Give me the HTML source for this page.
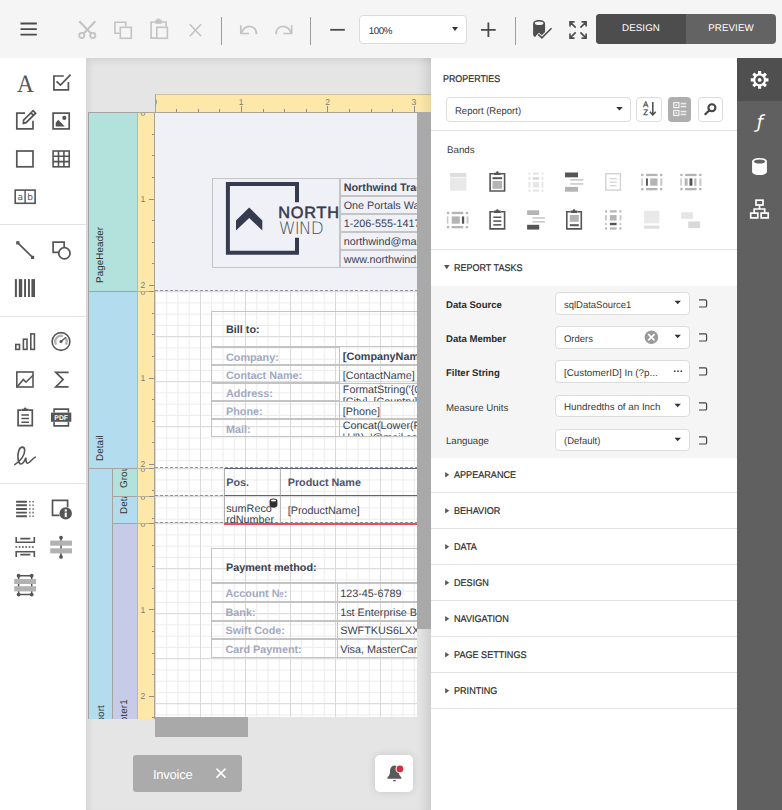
<!DOCTYPE html>
<html lang="en">
<head>
<meta charset="utf-8">
<title>Report Designer</title>
<style>
*{box-sizing:border-box;margin:0;padding:0}
html,body{width:782px;height:810px;overflow:hidden;background:#fff;font-family:"Liberation Sans",sans-serif;color:#333;text-rendering:geometricPrecision}
#app{position:relative;width:782px;height:810px;overflow:hidden}
svg{position:absolute;overflow:visible}
#topbar{position:absolute;left:0;top:0;width:782px;height:58px;background:#f5f5f5}
.vsep{position:absolute;top:17px;width:1px;height:28px;background:#9b9b9b}
#zoombox{position:absolute;left:359px;top:15px;width:108px;height:29px;background:#fff;border:1px solid #dcdcdc;border-radius:4px;font-size:9.75px;line-height:31.500px;padding-left:8.800px;color:#333;letter-spacing:-.4px}
#zoombox:after{content:"";position:absolute;right:8px;top:11px;border:3.5px solid transparent;border-top:4px solid #333;border-bottom:0}
#modes{position:absolute;left:596px;top:14px;width:180px;height:30px;border-radius:4px;overflow:hidden;background:#636363;color:#fff;font-size:9.75px;letter-spacing:.1px}
#modes div{position:absolute;top:0;height:30px;line-height:29px;text-align:center}
#m1{left:0;width:90px;background:#4d4d4d}
#m2{left:90px;width:90px}
#toolbox{position:absolute;left:0;top:58px;width:86px;height:752px;background:#fff}
.hsep{position:absolute;left:0;width:86px;height:1px;background:#e2e2e2}
#surface{position:absolute;left:86px;top:58px;width:345px;height:752px;background:#e5e5e5;overflow:hidden;box-shadow:inset 7px 7px 8px -5px rgba(0,0,0,.09), inset -13px 0 12px -9px rgba(0,0,0,.13)}
#panel{position:absolute;left:431px;top:58px;width:306px;height:752px;background:#fff;font-size:11px}
#tabs{position:absolute;left:737px;top:58px;width:45px;height:752px;background:#606060}
#tabs .act{position:absolute;left:0;top:0;width:45px;height:42.5px;background:#4f4f4f}
.vl{position:absolute;width:0;height:0;white-space:nowrap;font-size:9.8px;line-height:0;color:#333;transform:rotate(-90deg);transform-origin:0 0;letter-spacing:.12px}
.tk{position:absolute;height:1px;background:#8e8e8e}
.tkv{position:absolute;width:1px;background:#8e8e8e}
.rn{position:absolute;font-weight:normal;font-size:8.5px;line-height:12px;color:#777}
#page{position:absolute;overflow:hidden}
.t{position:absolute;white-space:nowrap;line-height:16px;height:16px;transform-origin:0 50%;color:#3a3a3a}
.az{position:absolute;font-size:8px;line-height:8px;font-weight:normal;color:#444;width:6px;text-align:center;-webkit-text-stroke:.25px #444}

</style>
</head>
<body>
<div id="app">
<div id="topbar">
<svg style="left:18px;top:18px" width="22" height="22" viewBox="18 18 22 22" ><path d="M20.500 23.500h16.300M20.500 29.200h16.300M20.500 34.700h16.300" stroke="#4a4a4a" stroke-width="1.800" fill="none"/></svg>
<svg style="left:76px;top:18px" width="24" height="24" viewBox="76 18 24 24" ><g fill="none" stroke="#c3c3c3"><path d="M79.300 21.200L91.300 33.900M95.300 21.200L83.300 33.900" stroke-width="2.100"/><circle cx="81.800" cy="35.500" r="2.600" stroke-width="1.700"/><circle cx="92.800" cy="35.500" r="2.600" stroke-width="1.700"/></g></svg>
<svg style="left:112px;top:18px" width="24" height="24" viewBox="112 18 24 24" ><g fill="none" stroke="#c3c3c3" stroke-width="1.600"><path d="M119.600 33.300H114.900V22.200h10.800V26.600"/><rect x="120.300" y="27.300" width="11" height="11"/></g></svg>
<svg style="left:148px;top:16px" width="24" height="26" viewBox="148 16 24 26" ><g fill="none" stroke="#c3c3c3" stroke-width="1.600"><path d="M156 38.100H151.100V22h15V26.600"/><rect x="156.800" y="27.300" width="10.600" height="11"/></g><rect x="155.400" y="19.600" width="6.200" height="4.200" fill="#c3c3c3"/><rect x="157.300" y="18.600" width="2.400" height="2" fill="#c3c3c3"/></svg>
<svg style="left:186px;top:20px" width="20" height="20" viewBox="186 20 20 20" ><path d="M189.800 24.200l11.300 12M201.100 24.200l-11.300 12" fill="none" stroke="#c3c3c3" stroke-width="1.600"/></svg>
<div class="vsep" style="left:221px"></div>
<svg style="left:238px;top:20px" width="22" height="18" viewBox="238 20 22 18" ><g fill="none" stroke="#c3c3c3" stroke-width="1.700"><path d="M240.800 25.300v8.200h8.200"/><path d="M241.300 33c2-4.600 5.300-6.900 9-6.500 3.700.4 6 3.300 6.200 7.600"/></g></svg>
<svg style="left:273px;top:20px" width="22" height="18" viewBox="273 20 22 18" ><g fill="none" stroke="#c3c3c3" stroke-width="1.700"><path d="M291.700 25.300v8.200h-8.200"/><path d="M291.200 33c-2-4.600-5.300-6.900-9-6.500-3.700.4-6 3.300-6.200 7.600"/></g></svg>
<div class="vsep" style="left:310px"></div>
<svg style="left:328px;top:20px" width="20" height="20" viewBox="328 20 20 20" ><path d="M330.200 29.800h14.600" stroke="#4a4a4a" stroke-width="1.800"/></svg>
<div id="zoombox">100%</div>
<svg style="left:479px;top:20px" width="20" height="20" viewBox="479 20 20 20" ><path d="M481 29.800h14.700M488.400 22.600v14.400" stroke="#4a4a4a" stroke-width="1.800" fill="none"/></svg>
<div class="vsep" style="left:515px"></div>
<svg style="left:530px;top:18px" width="24" height="24" viewBox="530 18 24 24" ><path d="M533.100 23.400c0-1.900 2.700-3.400 6-3.400s6 1.500 6 3.400v10.400l-3.200 2.900-3.300-3.200-3.500 3.500c-1.200-.6-2-1.500-2-2.600z" fill="#4f4f4f"/><ellipse cx="539.100" cy="23.300" rx="4.300" ry="1.800" fill="#f5f5f5"/><path d="M537.600 34.200l4.300 4 9.800-10" fill="none" stroke="#f5f5f5" stroke-width="4.200"/><path d="M538.200 34.400l3.700 3.500 9.600-9.700" fill="none" stroke="#4f4f4f" stroke-width="1.600"/></svg>
<svg style="left:567px;top:19px" width="22" height="22" viewBox="567 19 22 22" ><g fill="none" stroke="#4f4f4f" stroke-width="1.700"><path d="M570 26.500v-4.600h4.600M570.400 22.300l5.300 5.300M581.500 21.900h4.600v4.600M585.700 22.300l-5.300 5.300M570 33.500v4.600h4.600M570.400 37.700l5.300-5.300M586.100 33.500v4.600h-4.600M585.700 37.700l-5.300-5.300"/></g></svg>
<div id="modes"><div id="m1">DESIGN</div><div id="m2">PREVIEW</div></div>
</div>
<div id="toolbox">
<div style="position:absolute;left:12.800px;top:12.599999999999994px;width:25px;height:28px;font-family:'Liberation Serif',serif;font-size:25px;line-height:28px;text-align:center;color:#555;transform:scaleX(.93)">A</div>
<svg style="left:50px;top:12px" width="26" height="26" viewBox="50 70 26 26" ><g fill="none" stroke="#555" stroke-width="1.700"><path d="M63.800 76H53.900v13.800h14.500V81.900"/><path d="M56.500 81.300l4 3.800L70.600 74.600"/></g></svg>
<svg style="left:12px;top:48px" width="28" height="28" viewBox="12 106 28 28" ><g fill="none" stroke="#555" stroke-width="1.700"><path d="M25 113.100H16.800v15.800H33V120.800"/><path d="M23.400 123.300l.2-3.100 9.500-9.500 2.500 2.500-9.500 9.500zM31 112.800l2.500 2.500"/></g></svg>
<svg style="left:50px;top:48px" width="26" height="28" viewBox="50 106 26 28" ><rect x="53.100" y="113.100" width="16.100" height="15.800" fill="none" stroke="#555" stroke-width="1.700"/><circle cx="64.300" cy="117.900" r="2.100" fill="#555"/><path d="M55.700 126.400v-3.700l2.500-3 6.600 6.700z" fill="#555"/></svg>
<svg style="left:12px;top:88px" width="28" height="26" viewBox="12 146 28 26" ><rect x="16.800" y="151" width="16.200" height="15.800" fill="none" stroke="#555" stroke-width="1.700"/></svg>
<svg style="left:50px;top:88px" width="26" height="26" viewBox="50 146 26 26" ><g fill="none" stroke="#555" stroke-width="1.600"><rect x="53.100" y="151" width="16.100" height="15.800"/><path d="M58.500 151v15.800M63.900 151v15.800M53.100 156.300h16.100M53.100 161.600h16.100"/></g></svg>
<svg style="left:12px;top:128px" width="28" height="22" viewBox="12 186 28 22" ><rect x="15.200" y="190.100" width="19.900" height="13.200" fill="none" stroke="#555" stroke-width="1.600"/><path d="M25.100 190v13.400" stroke="#555" stroke-width="1.400"/><text x="20.200" y="200.300" text-anchor="middle" font-family="DejaVu Sans,Liberation Sans,sans-serif" font-size="9" fill="#555">a</text><text x="30.100" y="200.300" text-anchor="middle" font-family="DejaVu Sans,Liberation Sans,sans-serif" font-size="9" fill="#555">b</text></svg>
<div class="hsep" style="top:166px"></div>
<svg style="left:12px;top:180px" width="28" height="26" viewBox="12 238 28 26" ><path d="M17.800 242.800l14.800 14.600" stroke="#555" stroke-width="1.700"/><rect x="16.200" y="241.200" width="3.200" height="3.200" fill="#555"/><rect x="31" y="255.800" width="3.200" height="3.200" fill="#555"/></svg>
<svg style="left:50px;top:180px" width="28" height="26" viewBox="50 238 28 26" ><g fill="none" stroke="#555" stroke-width="1.700"><path d="M58.600 252.400H53.100V242.100h11.100v5"/><circle cx="64.400" cy="253.300" r="5.600"/></g></svg>
<svg style="left:12px;top:218px" width="28" height="24" viewBox="12 276 28 24" ><g fill="#555"><rect x="14.900" y="279.100" width="2" height="17.900"/><rect x="18.800" y="279.100" width="3.400" height="17.900"/><rect x="24.100" y="279.100" width="1.900" height="17.900"/><rect x="28" y="279.100" width="1.900" height="17.900"/><rect x="31.400" y="279.100" width="3.600" height="17.900"/></g></svg>
<div class="hsep" style="top:258px"></div>
<svg style="left:12px;top:272px" width="28" height="24" viewBox="12 330 28 24" ><g fill="none" stroke="#555" stroke-width="1.600"><rect x="15.800" y="344.500" width="3.700" height="4.900"/><rect x="23.400" y="339.200" width="3.600" height="10.200"/><rect x="30.800" y="333.900" width="3.600" height="15.500"/></g></svg>
<svg style="left:50px;top:272px" width="26" height="24" viewBox="50 330 26 24" ><circle cx="61" cy="341.500" r="8.900" fill="none" stroke="#555" stroke-width="1.600"/><path d="M56.300 344.700a5.600 5.600 0 0 1 6.700-8.400M65.300 337.800a5.600 5.600 0 0 1 .4 6.900" fill="none" stroke="#b2b2b2" stroke-width="2.300"/><path d="M61 341.500l4.900-4.200" stroke="#555" stroke-width="1.300"/><circle cx="61" cy="341.500" r="1.500" fill="#555"/></svg>
<svg style="left:12px;top:310px" width="28" height="24" viewBox="12 368 28 24" ><g fill="none" stroke="#555" stroke-width="1.600"><rect x="16.800" y="372" width="16.200" height="15"/><path d="M17 387l6.400-7.500 2.600 2.700 7-7"/></g></svg>
<svg style="left:50px;top:310px" width="26" height="24" viewBox="50 368 26 24" ><path d="M68.600 372.300H55.800l7.300 7.300-7.300 7.300h12.800" fill="none" stroke="#555" stroke-width="1.700"/></svg>
<svg style="left:12px;top:346px" width="28" height="26" viewBox="12 404 28 26" ><path d="M21.600 410.100H18.100v15.600h14.200V410.100H28.700" fill="none" stroke="#555" stroke-width="1.700"/><path d="M21.700 411v-2.200h2.300c0-1.700 2.400-1.700 2.400 0h2.300v2.200z" fill="#555"/><path d="M21.400 415h7.600M21.400 418.600h7.600M21.400 422.200h7.600" stroke="#555" stroke-width="1.500"/></svg>
<svg style="left:48px;top:346px" width="28" height="26" viewBox="48 404 28 26" ><path d="M54.100 412.500V409.100h14.300v3.400M54.100 422v3.900h14.300V422" fill="none" stroke="#555" stroke-width="1.600"/><rect x="51" y="412.600" width="20.300" height="9.200" fill="#555"/><text x="61.200" y="420" text-anchor="middle" font-family="Liberation Sans,sans-serif" font-weight="bold" font-size="6.900" fill="#fff">PDF</text></svg>
<svg style="left:10px;top:384px" width="30" height="28" viewBox="10 442 30 28" ><path d="M14.700 464.600c5.600-3 10.200-9.500 10-14.300-.2-4-4-4.500-5.700-.2-1.800 4.800-1.300 12 1.100 13.600 2.100 1.300 4.600-2.500 5.700-6 .3 2.400-.2 5.500 1.800 5.500 1.900 0 4.300-4.300 7.700-6.100" fill="none" stroke="#555" stroke-width="1.600" stroke-linecap="round"/></svg>
<div class="hsep" style="top:425px"></div>
<svg style="left:12px;top:438px" width="28" height="26" viewBox="12 496 28 26" ><path d="M16.100 501.700h10.800M16.100 505.300h10.800M16.100 509h10.800M16.100 512.600h10.800M16.100 516.200h10.800" stroke="#555" stroke-width="1.900"/><path d="M29 501.700h1.800M32.200 501.700h1.800M29 505.300h1.800M32.200 505.300h1.800M29 509h1.800M32.200 509h1.800M29 512.600h1.800M32.200 512.600h1.800M29 516.200h1.800M32.200 516.200h1.800" stroke="#888" stroke-width="1.600"/></svg>
<svg style="left:48px;top:438px" width="28" height="28" viewBox="48 496 28 28" ><path d="M59.500 515.300H52.500V500.300h15.100v7" fill="none" stroke="#555" stroke-width="1.700"/><circle cx="65.700" cy="513.400" r="6.200" fill="#555"/><rect x="64.700" y="509.400" width="2.100" height="2.100" fill="#fff"/><rect x="64.700" y="512.600" width="2.100" height="4.500" fill="#fff"/></svg>
<svg style="left:12px;top:476px" width="28" height="26" viewBox="12 534 28 26" ><g fill="none" stroke="#555" stroke-width="1.600"><path d="M16.200 537.100v5.100h18.100v-5.100M20.300 538.600h10M16.200 556.900v-5.100h18.100v5.100M20.300 554.600h10"/><path d="M15.400 547h19.800" stroke-dasharray="1.800 1.500"/></g></svg>
<svg style="left:48px;top:476px" width="28" height="26" viewBox="48 534 28 26" ><path d="M61 538v18.600" stroke="#555" stroke-width="1.500"/><rect x="50.200" y="540.600" width="21.800" height="5.100" fill="#b2b2b2"/><rect x="50.200" y="548.300" width="21.800" height="5.100" fill="#b2b2b2"/><circle cx="61" cy="537.600" r="1.900" fill="#555"/><circle cx="61" cy="556.900" r="1.900" fill="#555"/></svg>
<svg style="left:12px;top:514px" width="28" height="26" viewBox="12 572 28 26" ><path d="M18.600 575.700h13.100v18.900H18.600z" fill="none" stroke="#555" stroke-width="1.500"/><rect x="14.200" y="579" width="21.900" height="5" fill="#b2b2b2"/><rect x="14.200" y="586.200" width="21.900" height="5.200" fill="#b2b2b2"/><circle cx="18.600" cy="575.700" r="1.900" fill="#555"/><circle cx="31.700" cy="575.700" r="1.900" fill="#555"/><circle cx="18.600" cy="594.600" r="1.900" fill="#555"/><circle cx="31.700" cy="594.600" r="1.900" fill="#555"/></svg>
</div>
<div id="surface">
<div style="position:absolute;left:2px;top:54px;width:50px;height:607px;background:#a3a3a3"></div>
<div style="position:absolute;left:3px;top:55px;width:48px;height:178px;background:#b3e1dc"></div>
<div style="position:absolute;left:3px;top:234px;width:48px;height:176px;background:#b3dcee"></div>
<div style="position:absolute;left:3px;top:411px;width:23px;height:250px;background:#b3dcee"></div>
<div style="position:absolute;left:27px;top:411px;width:24px;height:27px;background:#b3e1dc"></div>
<div style="position:absolute;left:27px;top:439px;width:24px;height:26px;background:#b3dcee"></div>
<div style="position:absolute;left:27px;top:466px;width:24px;height:195px;background:#c6cbe7"></div>
<div style="position:absolute;left:3px;top:55px;width:48px;height:178px;overflow:hidden"><div class="vl" style="left:12px;top:170.3px">PageHeader</div></div>
<div style="position:absolute;left:3px;top:234px;width:48px;height:175px;overflow:hidden"><div class="vl" style="left:12px;top:168.89999999999998px">Detail</div></div>
<div style="position:absolute;left:3px;top:410px;width:23px;height:251px;overflow:hidden"><div class="vl" style="left:12.500px;top:292.5px">DetailReport</div></div>
<div style="position:absolute;left:27px;top:410.5px;width:24px;height:27px;overflow:hidden"><div class="vl" style="left:12px;top:19.19999999999999px">GroupHeader1</div></div>
<div style="position:absolute;left:27px;top:438.5px;width:24px;height:26px;overflow:hidden"><div class="vl" style="left:12px;top:17.799999999999955px">Detail1</div></div>
<div style="position:absolute;left:27px;top:465.5px;width:24px;height:195.5px;overflow:hidden"><div class="vl" style="left:11.500px;top:240.5px">ReportFooter1</div></div>
<div style="position:absolute;left:51px;top:54px;width:18px;height:607px;background:#fde8a9;border-left:1px solid #c6b88e;border-right:1px solid #a9a390;overflow:hidden"><div style="position:absolute;left:0;top:0.6px;width:17px;height:178.5px;overflow:hidden"><div style="position:absolute;left:0;top:-0.6px;width:17px;height:700px"><i class="tk" style="left:11px;top:0.1px;width:6px"></i><b class="rn" style="left:2.5px;top:-5.2px">0</b><i class="tk" style="left:13.5px;top:21.7px;width:3.5px"></i><i class="tk" style="left:13.5px;top:43.3px;width:3.5px"></i><i class="tk" style="left:13.5px;top:64.9px;width:3.5px"></i><i class="tk" style="left:11px;top:86.5px;width:6px"></i><b class="rn" style="left:2.5px;top:81.0px">1</b><i class="tk" style="left:13.5px;top:108.1px;width:3.5px"></i><i class="tk" style="left:13.5px;top:129.7px;width:3.5px"></i><i class="tk" style="left:13.5px;top:151.3px;width:3.5px"></i><i class="tk" style="left:11px;top:172.9px;width:6px"></i><b class="rn" style="left:2.5px;top:167.4px">2</b></div></div><div style="position:absolute;left:0;top:179.6px;width:17px;height:176.5px;overflow:hidden"><div style="position:absolute;left:0;top:-179.6px;width:17px;height:700px"><i class="tk" style="left:11px;top:179.1px;width:6px"></i><b class="rn" style="left:2.5px;top:173.8px">0</b><i class="tk" style="left:13.5px;top:200.7px;width:3.5px"></i><i class="tk" style="left:13.5px;top:222.3px;width:3.5px"></i><i class="tk" style="left:13.5px;top:243.9px;width:3.5px"></i><i class="tk" style="left:11px;top:265.5px;width:6px"></i><b class="rn" style="left:2.5px;top:260.0px">1</b><i class="tk" style="left:13.5px;top:287.1px;width:3.5px"></i><i class="tk" style="left:13.5px;top:308.7px;width:3.5px"></i><i class="tk" style="left:13.5px;top:330.3px;width:3.5px"></i><i class="tk" style="left:11px;top:351.9px;width:6px"></i><b class="rn" style="left:2.5px;top:346.4px">2</b></div></div><i style="position:absolute;left:0;top:179.0px;width:17px;height:1px;background:#b9b097"></i><i class="tk" style="left:11px;top:179.0px;width:6px"></i><div style="position:absolute;left:0;top:356.6px;width:17px;height:27.6px;overflow:hidden"><div style="position:absolute;left:0;top:-356.6px;width:17px;height:700px"><i class="tk" style="left:11px;top:356.1px;width:6px"></i><b class="rn" style="left:2.5px;top:350.8px">0</b><i class="tk" style="left:13.5px;top:377.7px;width:3.5px"></i></div></div><i style="position:absolute;left:0;top:356.0px;width:17px;height:1px;background:#b9b097"></i><i class="tk" style="left:11px;top:356.0px;width:6px"></i><div style="position:absolute;left:0;top:384.7px;width:17px;height:26.3px;overflow:hidden"><div style="position:absolute;left:0;top:-384.7px;width:17px;height:700px"><i class="tk" style="left:11px;top:384.2px;width:6px"></i><b class="rn" style="left:2.5px;top:378.9px">0</b><i class="tk" style="left:13.5px;top:405.8px;width:3.5px"></i></div></div><i style="position:absolute;left:0;top:384.1px;width:17px;height:1px;background:#b9b097"></i><i class="tk" style="left:11px;top:384.1px;width:6px"></i><div style="position:absolute;left:0;top:411.5px;width:17px;height:194.5px;overflow:hidden"><div style="position:absolute;left:0;top:-411.5px;width:17px;height:700px"><i class="tk" style="left:11px;top:411px;width:6px"></i><b class="rn" style="left:2.5px;top:405.7px">0</b><i class="tk" style="left:13.5px;top:432.6px;width:3.5px"></i><i class="tk" style="left:13.5px;top:454.2px;width:3.5px"></i><i class="tk" style="left:13.5px;top:475.8px;width:3.5px"></i><i class="tk" style="left:11px;top:497.4px;width:6px"></i><b class="rn" style="left:2.5px;top:491.9px">1</b><i class="tk" style="left:13.5px;top:519.0px;width:3.5px"></i><i class="tk" style="left:13.5px;top:540.6px;width:3.5px"></i><i class="tk" style="left:13.5px;top:562.2px;width:3.5px"></i><i class="tk" style="left:11px;top:583.8px;width:6px"></i><b class="rn" style="left:2.5px;top:578.3px">2</b><i class="tk" style="left:13.5px;top:605.4px;width:3.5px"></i></div></div><i style="position:absolute;left:0;top:410.9px;width:17px;height:1px;background:#b9b097"></i><i class="tk" style="left:11px;top:410.9px;width:6px"></i></div>
<div style="position:absolute;left:69px;top:36px;width:276px;height:18px;background:#fde8a9;border-left:1px solid #a9a390;border-top:1px solid #cdc29c;overflow:hidden"><i class="tkv" style="left:-1.4px;top:11px;height:6px"></i><b class="rn" style="left:-6.3px;top:1px;width:10px;text-align:center">0</b><i class="tkv" style="left:20.2px;top:13.5px;height:3.5px"></i><i class="tkv" style="left:41.8px;top:13.5px;height:3.5px"></i><i class="tkv" style="left:63.4px;top:13.5px;height:3.5px"></i><i class="tkv" style="left:85.0px;top:11px;height:6px"></i><b class="rn" style="left:80.1px;top:1px;width:10px;text-align:center">1</b><i class="tkv" style="left:106.6px;top:13.5px;height:3.5px"></i><i class="tkv" style="left:128.2px;top:13.5px;height:3.5px"></i><i class="tkv" style="left:149.8px;top:13.5px;height:3.5px"></i><i class="tkv" style="left:171.4px;top:11px;height:6px"></i><b class="rn" style="left:166.5px;top:1px;width:10px;text-align:center">2</b><i class="tkv" style="left:193.0px;top:13.5px;height:3.5px"></i><i class="tkv" style="left:214.6px;top:13.5px;height:3.5px"></i><i class="tkv" style="left:236.2px;top:13.5px;height:3.5px"></i><i class="tkv" style="left:257.8px;top:11px;height:6px"></i><b class="rn" style="left:252.9px;top:1px;width:10px;text-align:center">3</b><i class="tkv" style="left:279.4px;top:13.5px;height:3.5px"></i></div>
<div style="position:absolute;left:2px;top:54px;width:50px;height:1px;background:#a3a3a3"></div>
<div style="position:absolute;left:69px;top:54px;width:262px;height:605.4px;overflow:hidden"><div style="position:absolute;left:0px;top:0px;width:400px;height:178.5px;background:#f0f1f6"></div>
<div style="position:absolute;left:0px;top:179px;width:400px;height:176.5px;background-color:#fff;background-image:linear-gradient(to right,#d9d9d9 1px,transparent 1px),linear-gradient(to bottom,#d9d9d9 1px,transparent 1px),linear-gradient(to right,#ebebeb 1px,transparent 1px),linear-gradient(to bottom,#ebebeb 1px,transparent 1px);background-size:45px 45px,45px 45px,11.25px 11.25px,11.25px 11.25px;background-position:0 0.2px"></div>
<div style="position:absolute;left:0px;top:356.2px;width:400px;height:27.3px;background-color:#fff;background-image:linear-gradient(to right,#d9d9d9 1px,transparent 1px),linear-gradient(to bottom,#d9d9d9 1px,transparent 1px),linear-gradient(to right,#ebebeb 1px,transparent 1px),linear-gradient(to bottom,#ebebeb 1px,transparent 1px);background-size:45px 45px,45px 45px,11.25px 11.25px,11.25px 11.25px;background-position:0 0.2px"></div>
<div style="position:absolute;left:0px;top:384.2px;width:400px;height:26.3px;background-color:#fff;background-image:linear-gradient(to right,#d9d9d9 1px,transparent 1px),linear-gradient(to bottom,#d9d9d9 1px,transparent 1px),linear-gradient(to right,#ebebeb 1px,transparent 1px),linear-gradient(to bottom,#ebebeb 1px,transparent 1px);background-size:45px 45px,45px 45px,11.25px 11.25px,11.25px 11.25px;background-position:0 0.2px"></div>
<div style="position:absolute;left:0px;top:411px;width:400px;height:195px;background-color:#fff;background-image:linear-gradient(to right,#d9d9d9 1px,transparent 1px),linear-gradient(to bottom,#d9d9d9 1px,transparent 1px),linear-gradient(to right,#ebebeb 1px,transparent 1px),linear-gradient(to bottom,#ebebeb 1px,transparent 1px);background-size:45px 45px,45px 45px,11.25px 11.25px,11.25px 11.25px;background-position:0 0.2px"></div>
<div style="position:absolute;left:0px;top:178.2px;width:400px;height:1px;background:repeating-linear-gradient(to right,#949494 0,#949494 3px,transparent 3px,transparent 5px)"></div>
<div style="position:absolute;left:0px;top:355.1px;width:400px;height:1px;background:repeating-linear-gradient(to right,#949494 0,#949494 3px,transparent 3px,transparent 5px)"></div>
<div style="position:absolute;left:0px;top:383.2px;width:400px;height:1px;background:repeating-linear-gradient(to right,#949494 0,#949494 3px,transparent 3px,transparent 5px)"></div>
<div style="position:absolute;left:0px;top:410px;width:400px;height:1px;background:repeating-linear-gradient(to right,#949494 0,#949494 3px,transparent 3px,transparent 5px)"></div>
<div style="position:absolute;left:57px;top:65.5px;width:128px;height:90.5px;border:1px solid #c4c4c4;overflow:hidden"><svg style="left:0px;top:0.5px" width="126" height="88" viewBox="213 179 126 88" ><path d="M299 202.200V182H225.900v72.700H299V237.700h-4V250.700H229.900V186H295v16.200z" fill="#363b4f"/><path d="M236 220.600l13.200-13 13.100 13v10l-13.100-12.700L236 230.600z" fill="#363b4f"/><text x="278.300" y="217.500" font-family="Liberation Sans,sans-serif" font-size="16.300" letter-spacing=".75" stroke="#363b4f" stroke-width=".55" fill="#363b4f">NORTH</text><text x="278.800" y="234.300" font-family="DejaVu Sans Light,DejaVu Sans,Liberation Sans,sans-serif" font-weight="200" font-size="17" letter-spacing="-.9" fill="#4a4f62">WIND</text></svg>
</div>
<div style="position:absolute;left:185px;top:65.5px;width:120px;height:18.5px;border:1px solid #c4c4c4;font-size:10.8px;color:#3a3f52;white-space:nowrap;overflow:hidden;padding-top:.75px;line-height:19.4px;padding-left:2.700px"><b>Northwind Traders</b></div>
<div style="position:absolute;left:185px;top:83.5px;width:120px;height:18.5px;border:1px solid #c4c4c4;font-size:10.8px;color:#3a3f52;white-space:nowrap;overflow:hidden;padding-top:.75px;line-height:19.4px;padding-left:2.700px">One Portals Way</div>
<div style="position:absolute;left:185px;top:101.5px;width:120px;height:18.5px;border:1px solid #c4c4c4;font-size:10.8px;color:#3a3f52;white-space:nowrap;overflow:hidden;padding-top:.75px;line-height:19.4px;padding-left:2.700px">1-206-555-1417</div>
<div style="position:absolute;left:185px;top:119.5px;width:120px;height:18.5px;border:1px solid #c4c4c4;font-size:10.8px;color:#3a3f52;white-space:nowrap;overflow:hidden;padding-top:.75px;line-height:19.4px;padding-left:2.700px">northwind@mail.com</div>
<div style="position:absolute;left:185px;top:137.5px;width:120px;height:18.5px;border:1px solid #c4c4c4;font-size:10.8px;color:#3a3f52;white-space:nowrap;overflow:hidden;padding-top:.75px;line-height:19.4px;padding-left:2.700px">www.northwind.com</div>
<div style="position:absolute;left:56px;top:199px;width:260px;height:36px;border:1px solid #c4c4c4;font-size:10.8px;color:#3a3f52;white-space:nowrap;overflow:hidden;padding-top:.75px;font-weight:bold;line-height:34px;padding-left:14px">Bill to:</div>
<div style="position:absolute;left:56px;top:235px;width:128.5px;height:18px;border:1px solid #c4c4c4;font-size:10.8px;color:#3a3f52;white-space:nowrap;overflow:hidden;padding-top:.75px;color:#a2a9c0;font-weight:bold;line-height:18.6px;padding-left:14px">Company:</div>
<div style="position:absolute;left:184px;top:234px;width:130px;height:18.5px;border:1px solid #c4c4c4;font-size:10.8px;color:#3a3f52;white-space:nowrap;overflow:hidden;padding-top:.75px;line-height:19.1px;padding-left:2.800px"><b>[CompanyName]</b></div>
<div style="position:absolute;left:56px;top:253px;width:128.5px;height:18px;border:1px solid #c4c4c4;font-size:10.8px;color:#3a3f52;white-space:nowrap;overflow:hidden;padding-top:.75px;color:#a2a9c0;font-weight:bold;line-height:18.6px;padding-left:14px">Contact Name:</div>
<div style="position:absolute;left:184px;top:253px;width:130px;height:18.5px;border:1px solid #c4c4c4;font-size:10.8px;color:#3a3f52;white-space:nowrap;overflow:hidden;padding-top:.75px;line-height:19.1px;padding-left:2.800px">[ContactName]</div>
<div style="position:absolute;left:56px;top:271px;width:128.5px;height:18px;border:1px solid #c4c4c4;font-size:10.8px;color:#3a3f52;white-space:nowrap;overflow:hidden;padding-top:.75px;color:#a2a9c0;font-weight:bold;line-height:18.6px;padding-left:14px">Address:</div>
<div style="position:absolute;left:184px;top:271px;width:130px;height:18.5px;border:1px solid #c4c4c4;font-size:10.8px;color:#3a3f52;white-space:nowrap;overflow:hidden;padding-top:.75px;line-height:12px;padding-top:.4px;padding-left:2.800px">FormatString('{0}, {1}',<br>[City], [Country])</div>
<div style="position:absolute;left:56px;top:289px;width:128.5px;height:18px;border:1px solid #c4c4c4;font-size:10.8px;color:#3a3f52;white-space:nowrap;overflow:hidden;padding-top:.75px;color:#a2a9c0;font-weight:bold;line-height:18.6px;padding-left:14px">Phone:</div>
<div style="position:absolute;left:184px;top:289px;width:130px;height:18px;border:1px solid #c4c4c4;font-size:10.8px;color:#3a3f52;white-space:nowrap;overflow:hidden;padding-top:.75px;line-height:18.6px;padding-left:2.800px">[Phone]</div>
<div style="position:absolute;left:56px;top:307px;width:128.5px;height:18px;border:1px solid #c4c4c4;font-size:10.8px;color:#3a3f52;white-space:nowrap;overflow:hidden;padding-top:.75px;color:#a2a9c0;font-weight:bold;line-height:18.6px;padding-left:14px">Mail:</div>
<div style="position:absolute;left:184px;top:307px;width:130px;height:17.5px;border:1px solid #c4c4c4;font-size:10.8px;color:#3a3f52;white-space:nowrap;overflow:hidden;padding-top:.75px;line-height:12px;padding-top:.4px;padding-left:2.800px">Concat(Lower(Replace([ContactName],<br>' ','')), '@mail.com')</div>
<div style="position:absolute;left:69px;top:356px;width:56.5px;height:27.5px;border-left:1px solid #b0b0b0;border-right:1px solid #b0b0b0;border-top:1px solid #5d637b;border-bottom:1px solid #5d637b;font-size:10.8px;color:#3a3f52;white-space:nowrap;overflow:hidden;padding-top:.75px;color:#4e546e;font-weight:bold;line-height:26.600px;padding-left:1.200px">Pos.</div>
<div style="position:absolute;left:124.5px;top:356px;width:200px;height:27.5px;border-left:1px solid #b8b8b8;border-top:1px solid #5d637b;border-bottom:1px solid #5d637b;font-size:10.8px;color:#3a3f52;white-space:nowrap;overflow:hidden;padding-top:.75px;color:#4e546e;font-weight:bold;line-height:26.600px;padding-left:7.200px">Product Name</div>
<div style="position:absolute;left:69px;top:384px;width:56.5px;height:26.5px;border-left:1px solid #b0b0b0;border-right:1px solid #b0b0b0;font-size:10.8px;color:#3a3f52;white-space:nowrap;overflow:hidden;padding-top:.75px;line-height:11.800px;padding-left:1.200px;padding-top:7.500px;white-space:normal">sumReco<br>rdNumber<svg style="left:44px;top:2px" width="10" height="11" viewBox="269 498 10 11" ><path d="M269.600 500.600c0-1.200 1.700-2.100 3.900-2.100s3.900.9 3.900 2.100v5c0 1.200-1.700 2.100-3.900 2.100s-3.900-.9-3.900-2.100z" fill="#2f2f2f"/><ellipse cx="273.500" cy="500.500" rx="2.700" ry="1.100" fill="#fff"/></svg>
</div>
<div style="position:absolute;left:124.5px;top:384px;width:200px;height:26.5px;border-left:1px solid #b8b8b8;font-size:10.8px;color:#3a3f52;white-space:nowrap;overflow:hidden;padding-top:.75px;line-height:29px;padding-left:7.200px">[ProductName]</div>
<div style="position:absolute;left:69px;top:410.7px;width:300px;height:2px;background:#e9505b"></div>
<div style="position:absolute;left:56px;top:436px;width:260px;height:35px;border:1px solid #c4c4c4;font-size:10.8px;color:#3a3f52;white-space:nowrap;overflow:hidden;padding-top:.75px;font-weight:bold;line-height:37px;padding-left:14px">Payment method:</div>
<div style="position:absolute;left:56px;top:471px;width:126.5px;height:19px;border:1px solid #c4c4c4;font-size:10.8px;color:#3a3f52;white-space:nowrap;overflow:hidden;padding-top:.75px;color:#a2a9c0;font-weight:bold;line-height:19.2px;padding-left:13.500px">Account №:</div>
<div style="position:absolute;left:182px;top:471px;width:130px;height:19px;border:1px solid #c4c4c4;font-size:10.8px;color:#3a3f52;white-space:nowrap;overflow:hidden;padding-top:.75px;line-height:19.2px;padding-left:2.200px">123-45-6789</div>
<div style="position:absolute;left:56px;top:490px;width:126.5px;height:18.5px;border:1px solid #c4c4c4;font-size:10.8px;color:#3a3f52;white-space:nowrap;overflow:hidden;padding-top:.75px;color:#a2a9c0;font-weight:bold;line-height:18.7px;padding-left:13.500px">Bank:</div>
<div style="position:absolute;left:182px;top:490px;width:130px;height:18.5px;border:1px solid #c4c4c4;font-size:10.8px;color:#3a3f52;white-space:nowrap;overflow:hidden;padding-top:.75px;line-height:18.7px;padding-left:2.200px">1st Enterprise Bank</div>
<div style="position:absolute;left:56px;top:508.5px;width:126.5px;height:18.5px;border:1px solid #c4c4c4;font-size:10.8px;color:#3a3f52;white-space:nowrap;overflow:hidden;padding-top:.75px;color:#a2a9c0;font-weight:bold;line-height:18.7px;padding-left:13.500px">Swift Code:</div>
<div style="position:absolute;left:182px;top:508.5px;width:130px;height:18.5px;border:1px solid #c4c4c4;font-size:10.8px;color:#3a3f52;white-space:nowrap;overflow:hidden;padding-top:.75px;line-height:18.7px;padding-left:2.200px">SWFTKUS6LXX</div>
<div style="position:absolute;left:56px;top:527px;width:126.5px;height:18.5px;border:1px solid #c4c4c4;font-size:10.8px;color:#3a3f52;white-space:nowrap;overflow:hidden;padding-top:.75px;color:#a2a9c0;font-weight:bold;line-height:18.7px;padding-left:13.500px">Card Payment:</div>
<div style="position:absolute;left:182px;top:527px;width:130px;height:18.5px;border:1px solid #c4c4c4;font-size:10.8px;color:#3a3f52;white-space:nowrap;overflow:hidden;padding-top:.75px;line-height:18.7px;padding-left:2.200px">Visa, MasterCard</div>
</div>
<div style="position:absolute;left:52px;top:53.5px;width:293px;height:1px;background:#aaa69a"></div>
<div style="position:absolute;left:333px;top:36px;width:12px;height:18px;background:linear-gradient(to right,rgba(0,0,0,0),rgba(0,0,0,.07))"></div>
<div style="position:absolute;left:331px;top:54px;width:14px;height:516.5px;background:#a9a9a9"></div>
<div style="position:absolute;left:69px;top:659.4px;width:93px;height:19.2px;background:#a9a9a9"></div>
<div style="position:absolute;left:47px;top:697px;width:109px;height:37px;background:#ababab;border-radius:3px;color:#fff;font-size:13px;line-height:40px;padding-left:20px;letter-spacing:-.25px">Invoice<svg style="left:82px;top:12px" width="12" height="12" viewBox="215 767 12 12" ><path d="M216.500 768.600l9 9M225.500 768.600l-9 9" stroke="#fff" stroke-width="1.500" fill="none"/></svg>
</div>
<div style="position:absolute;left:289px;top:697px;width:38px;height:37px;background:#fff;border-radius:5px;box-shadow:0 0 9px rgba(0,0,0,.13)"><svg style="left:8px;top:8px" width="22" height="22" viewBox="383 763 22 22" ><path d="M394.400 765.600c-3.600.5-4.400 3.400-4.400 6.200 0 3.300-1.600 4.600-2.600 5.600v1.300h14v-1.300c-1-1-2.600-2.300-2.600-5.600 0-2.800-.8-5.700-4.400-6.200z" fill="#5a5a5a"/><rect x="392.900" y="780" width="3" height="1.300" rx=".6" fill="#5a5a5a"/><circle cx="399.900" cy="768.900" r="4.400" fill="#fff"/><circle cx="399.900" cy="768.900" r="3.400" fill="#d2303f"/></svg>
</div>
</div>
<div id="panel">
<div class="t" style="left:12.3px;top:14.2px;font-size:9.75px;transform:scaleX(0.912);color:#2b2b2b;-webkit-text-stroke:.2px #2b2b2b">PROPERTIES</div>
<div style="position:absolute;left:15px;top:39px;width:185px;height:24.5px;background:#fff;border:1px solid #dcdcdc;border-radius:4px"></div>
<div class="t" style="left:24px;top:45.7px;font-size:9.75px;transform:scaleX(0.976);">Report (Report)</div>
<svg style="left:183px;top:46px" width="12" height="10" viewBox="614 104 12 10" ><path d="M616.200 107h6.600l-3.300 3.600z" fill="#333"/></svg>
<div style="position:absolute;left:205.3px;top:39px;width:25.3px;height:24.5px;background:#fff;border:1px solid #dcdcdc;border-radius:4px"></div>
<div class="az" style="left:211.60000000000002px;top:43.2px">A</div><div class="az" style="left:211.79999999999995px;top:51.099999999999994px">Z</div>
<svg style="left:217px;top:42px" width="10" height="18" viewBox="648 100 10 18" ><path d="M652.800 102v12.300M649.900 111.800l2.900 3.200 2.900-3.200" fill="none" stroke="#4a4a4a" stroke-width="1.500"/></svg>
<div style="position:absolute;left:236.8px;top:39px;width:23.6px;height:24.5px;background:#aeaeae;border-radius:4px"></div>
<svg style="left:241px;top:42px" width="16" height="18" viewBox="672 100 16 18" ><g fill="none" stroke="#f4f4f4" stroke-width="1.200"><rect x="673.700" y="102.600" width="5.200" height="5"/><rect x="673.700" y="110.500" width="5.200" height="5"/></g><g fill="#f1f1f1"><rect x="675.500" y="104.400" width="1.600" height="1.600"/><rect x="675.500" y="112.200" width="1.600" height="1.600"/><rect x="680.600" y="102.800" width="5.600" height="1.600" opacity=".9"/><rect x="680.600" y="105.800" width="5.600" height="1.600" opacity=".9"/><rect x="680.600" y="110.700" width="5.600" height="1.600" opacity=".9"/><rect x="680.600" y="113.700" width="5.600" height="1.600" opacity=".9"/></g></svg>
<div style="position:absolute;left:267.3px;top:39px;width:24.8px;height:24.5px;background:#fff;border:1px solid #dcdcdc;border-radius:4px"></div>
<svg style="left:271px;top:42px" width="18" height="18" viewBox="702 100 18 18" ><circle cx="711.900" cy="107.700" r="3.500" fill="none" stroke="#444" stroke-width="2.100"/><path d="M709.400 110.300l-4.700 4.500" stroke="#444" stroke-width="2.200"/></svg>
<div style="position:absolute;left:0px;top:72px;width:306px;height:1px;background:#e2e2e2"></div>
<div class="t" style="left:16px;top:84.9px;font-size:9.75px;transform:scaleX(1);">Bands</div>
<svg style="left:9px;top:107px" width="270" height="70" viewBox="440 165 270 70" ><rect x="450" y="173" width="16.3" height="3.9" fill="#dedede"/><rect x="450" y="177.6" width="16.3" height="13.1" fill="#e9e9e9"/><path d="M493.8 173.8H490.1v17.2h14.5V173.8H500.90000000000003" fill="none" stroke="#555" stroke-width="1.600"/><path d="M493.90000000000003 175v-2.300h2.200c0-1.800 2.500-1.800 2.500 0h2.200v2.300z" fill="#555"/><rect x="492.5" y="177.2" width="9.6" height="2" fill="#555"/><rect x="492.5" y="181" width="9.6" height="7.8" fill="#b4b4b4"/><rect x="528.4" y="172.5" width="2.0" height="2.2" fill="#e6e6e6"/><rect x="532.8" y="172.5" width="6.2" height="2.2" fill="#e6e6e6"/><rect x="541.4" y="172.5" width="2.0" height="2.2" fill="#e6e6e6"/><rect x="528.4" y="189.5" width="2.0" height="2.2" fill="#e6e6e6"/><rect x="532.8" y="189.5" width="6.2" height="2.2" fill="#e6e6e6"/><rect x="541.4" y="189.5" width="2.0" height="2.2" fill="#e6e6e6"/><rect x="528.4" y="177" width="2" height="3" fill="#e6e6e6"/><rect x="528.4" y="182" width="2" height="5.5" fill="#e6e6e6"/><rect x="541.4" y="177" width="2" height="3" fill="#e6e6e6"/><rect x="541.4" y="182" width="2" height="5.5" fill="#e6e6e6"/><rect x="532.8" y="177" width="6.2" height="3" fill="#dcdcdc"/><rect x="532.8" y="182" width="6.2" height="5.5" fill="#e6e6e6"/><rect x="565" y="172.5" width="13" height="4.8" fill="#555"/><rect x="570.2" y="179.1" width="13.1" height="1.5" fill="#c6c6c6"/><rect x="570.2" y="183.2" width="13.1" height="1.5" fill="#c6c6c6"/><rect x="565" y="186.9" width="13" height="4.8" fill="#b4b4b4"/><rect x="605.800" y="173.700" width="14.600" height="16.400" fill="none" stroke="#d2d2d2" stroke-width="1.400"/><rect x="609.5" y="178" width="7.3" height="1.3" fill="#d6d6d6"/><rect x="609.5" y="181.5" width="7.3" height="1.3" fill="#d6d6d6"/><rect x="609.5" y="185" width="7.3" height="1.3" fill="#d6d6d6"/><rect x="641.2" y="173.8" width="2.3" height="2.3" fill="#b4b4b4"/><rect x="646.0" y="173.8" width="11.5" height="2.3" fill="#b4b4b4"/><rect x="660.0" y="173.8" width="2.3" height="2.3" fill="#b4b4b4"/><rect x="641.2" y="188.0" width="2.3" height="2.3" fill="#b4b4b4"/><rect x="646.0" y="188.0" width="11.5" height="2.3" fill="#b4b4b4"/><rect x="660.0" y="188.0" width="2.3" height="2.3" fill="#b4b4b4"/><rect x="641.2" y="178.4" width="1.5" height="7.3" fill="#c6c6c6"/><rect x="660.3" y="178.4" width="2" height="7.3" fill="#c6c6c6"/><rect x="646.0" y="178.4" width="1.9" height="7.3" fill="#555"/><rect x="650.2" y="178.4" width="7.3" height="7.3" fill="#b4b4b4"/><rect x="680.3" y="173.8" width="2.3" height="2.3" fill="#b4b4b4"/><rect x="685.1" y="173.8" width="11.5" height="2.3" fill="#b4b4b4"/><rect x="699.1" y="173.8" width="2.3" height="2.3" fill="#b4b4b4"/><rect x="680.3" y="188.0" width="2.3" height="2.3" fill="#b4b4b4"/><rect x="685.1" y="188.0" width="11.5" height="2.3" fill="#b4b4b4"/><rect x="699.1" y="188.0" width="2.3" height="2.3" fill="#b4b4b4"/><rect x="680.3" y="178.4" width="1.5" height="7.3" fill="#c6c6c6"/><rect x="699.4" y="178.4" width="2" height="7.3" fill="#c6c6c6"/><rect x="684.7" y="178.4" width="2.9" height="7.3" fill="#b4b4b4"/><rect x="689.5" y="178.4" width="2.9" height="7.3" fill="#555"/><rect x="694.3" y="178.4" width="2.1" height="7.3" fill="#b4b4b4"/><rect x="446.9" y="211.8" width="2.3" height="2.3" fill="#b4b4b4"/><rect x="451.7" y="211.8" width="11.5" height="2.3" fill="#b4b4b4"/><rect x="465.7" y="211.8" width="2.3" height="2.3" fill="#b4b4b4"/><rect x="446.9" y="226.0" width="2.3" height="2.3" fill="#b4b4b4"/><rect x="451.7" y="226.0" width="11.5" height="2.3" fill="#b4b4b4"/><rect x="465.7" y="226.0" width="2.3" height="2.3" fill="#b4b4b4"/><rect x="446.9" y="216.4" width="1.5" height="7.3" fill="#c6c6c6"/><rect x="466.5" y="216.4" width="2" height="7.3" fill="#c6c6c6"/><rect x="451.7" y="216.4" width="8.1" height="7.3" fill="#b4b4b4"/><rect x="461.9" y="216.4" width="2.3" height="7.3" fill="#555"/><path d="M493.8 211.70000000000002H490.1v17.2h14.5V211.70000000000002H500.90000000000003" fill="none" stroke="#555" stroke-width="1.600"/><path d="M493.90000000000003 212.9v-2.300h2.200c0-1.800 2.500-1.800 2.500 0h2.200v2.300z" fill="#555"/><rect x="493.3" y="216.5" width="8" height="1.5" fill="#555"/><rect x="493.3" y="220.3" width="8" height="1.5" fill="#555"/><rect x="493.3" y="224.1" width="8" height="1.5" fill="#555"/><rect x="527.1" y="210.3" width="12.1" height="4.7" fill="#b4b4b4"/><rect x="532.3" y="217.2" width="12.6" height="1.5" fill="#c6c6c6"/><rect x="532.3" y="221.1" width="12.6" height="1.5" fill="#c6c6c6"/><rect x="527.1" y="224.8" width="12.1" height="4.8" fill="#555"/><path d="M570.5 211.70000000000002H566.8v17.2h14.5V211.70000000000002H577.6" fill="none" stroke="#555" stroke-width="1.600"/><path d="M570.6 212.9v-2.300h2.200c0-1.800 2.500-1.800 2.500 0h2.200v2.300z" fill="#555"/><rect x="569.8" y="215" width="9" height="6.8" fill="#b4b4b4"/><rect x="569.8" y="224.2" width="9" height="2" fill="#555"/><rect x="605.1" y="210.3" width="2" height="2.2" fill="#b4b4b4"/><rect x="609.9" y="210.3" width="6.7" height="2.2" fill="#b4b4b4"/><rect x="619.4" y="210.3" width="2" height="2.2" fill="#b4b4b4"/><rect x="605.1" y="227.4" width="2" height="2.2" fill="#b4b4b4"/><rect x="609.9" y="227.4" width="6.7" height="2.2" fill="#b4b4b4"/><rect x="619.4" y="227.4" width="2" height="2.2" fill="#b4b4b4"/><rect x="605.1" y="215.1" width="1.8" height="5.4" fill="#c6c6c6"/><rect x="605.1" y="222.8" width="1.8" height="2.4" fill="#c6c6c6"/><rect x="619.6" y="215.1" width="1.8" height="5.4" fill="#c6c6c6"/><rect x="619.6" y="222.8" width="1.8" height="2.4" fill="#c6c6c6"/><rect x="609.9" y="215.1" width="6.7" height="5.4" fill="#b4b4b4"/><rect x="609.9" y="222.8" width="6.7" height="2.4" fill="#555"/><rect x="644.1" y="210.8" width="15.3" height="12.5" fill="#e9e9e9"/><rect x="644.1" y="225.6" width="15.3" height="3.1" fill="#dedede"/><rect x="681.3" y="212.2" width="11.7" height="6.7" fill="#e6e6e6"/><rect x="688.2" y="221.4" width="11.9" height="6.7" fill="#d9d9d9"/></svg>
<div style="position:absolute;left:0px;top:191px;width:306px;height:1px;background:#e2e2e2"></div>
<svg style="left:12px;top:205px" width="8" height="8" viewBox="443 263 8 8" ><path d="M444 265h5.600l-2.800 4.300z" fill="#555"/></svg>
<div class="t" style="left:22.5px;top:202.7px;font-size:9.75px;transform:scaleX(0.924);color:#2b2b2b;-webkit-text-stroke:.2px #2b2b2b">REPORT TASKS</div>
<div style="position:absolute;left:0px;top:227.5px;width:306px;height:172px;background:#f5f5f5"></div>
<div class="t" style="left:14.6px;top:239.7px;font-size:9.75px;transform:scaleX(0.982);font-weight:bold;color:#2b2b2b">Data Source</div>
<div style="position:absolute;left:124.4px;top:234.4px;width:134.2px;height:22.4px;background:#fff;border:1px solid #dcdcdc;border-radius:4px"></div>
<div class="t" style="left:133.3px;top:239.5px;font-size:9.75px;transform:scaleX(0.971);">sqlDataSource1</div>
<svg style="left:241px;top:240.39999999999998px" width="12" height="10" viewBox="672 298.4 12 10" ><path d="M674.500 301.2h6.400l-3.200 3.400z" fill="#333"/></svg>
<svg style="left:266px;top:240.39999999999998px" width="12" height="12" viewBox="697 298.4 12 12" ><path d="M699 300.3h6.300c.7 0 1.300.6 1.300 1.300v4.500c0 .7-.6 1.300-1.300 1.300h-6.300" fill="none" stroke="#444" stroke-width="1.200"/></svg>
<div class="t" style="left:14.6px;top:273.7px;font-size:9.75px;transform:scaleX(0.982);font-weight:bold;color:#2b2b2b">Data Member</div>
<div style="position:absolute;left:124.4px;top:268.4px;width:134.2px;height:22.4px;background:#fff;border:1px solid #dcdcdc;border-radius:4px"></div>
<div class="t" style="left:133.3px;top:273.5px;font-size:9.75px;transform:scaleX(0.971);">Orders</div>
<svg style="left:241px;top:274.4px" width="12" height="10" viewBox="672 332.4 12 10" ><path d="M674.500 335.2h6.400l-3.200 3.400z" fill="#333"/></svg>
<svg style="left:213px;top:272.4px" width="16" height="16" viewBox="644 330.4 16 16" ><circle cx="651.400" cy="337.59999999999997" r="6.800" fill="#9b9b9b"/><path d="M648.300 334.5l6.200 6.200M654.500 334.5l-6.200 6.200" stroke="#fff" stroke-width="1.700"/></svg>
<svg style="left:266px;top:274.4px" width="12" height="12" viewBox="697 332.4 12 12" ><path d="M699 334.3h6.300c.7 0 1.300.6 1.300 1.300v4.500c0 .7-.6 1.300-1.300 1.300h-6.300" fill="none" stroke="#444" stroke-width="1.200"/></svg>
<div class="t" style="left:14.6px;top:308.0px;font-size:9.75px;transform:scaleX(0.982);font-weight:bold;color:#2b2b2b">Filter String</div>
<div style="position:absolute;left:124.4px;top:302.4px;width:134.2px;height:22.4px;background:#fff;border:1px solid #dcdcdc;border-radius:4px"></div>
<div class="t" style="left:133.3px;top:307.8px;font-size:9.75px;transform:scaleX(1.005);">[CustomerID] In (?p...</div>
<svg style="left:241px;top:310.4px" width="12" height="6" viewBox="672 368.4 12 6" ><g fill="#444"><circle cx="674.700" cy="371.59999999999997" r=".9"/><circle cx="678" cy="371.59999999999997" r=".9"/><circle cx="681.300" cy="371.59999999999997" r=".9"/></g></svg>
<svg style="left:266px;top:308.4px" width="12" height="12" viewBox="697 366.4 12 12" ><path d="M699 368.3h6.300c.7 0 1.300.6 1.300 1.300v4.500c0 .7-.6 1.300-1.300 1.300h-6.300" fill="none" stroke="#444" stroke-width="1.200"/></svg>
<div class="t" style="left:14.6px;top:342.5px;font-size:9.75px;transform:scaleX(0.99);">Measure Units</div>
<div style="position:absolute;left:124.4px;top:336.9px;width:134.2px;height:22.4px;background:#fff;border:1px solid #dcdcdc;border-radius:4px"></div>
<div class="t" style="left:133.3px;top:342.3px;font-size:9.75px;transform:scaleX(1.005);">Hundredths of an Inch</div>
<svg style="left:241px;top:342.9px" width="12" height="10" viewBox="672 400.9 12 10" ><path d="M674.500 403.7h6.400l-3.200 3.400z" fill="#333"/></svg>
<svg style="left:266px;top:342.9px" width="12" height="12" viewBox="697 400.9 12 12" ><path d="M699 402.8h6.300c.7 0 1.300.6 1.300 1.300v4.500c0 .7-.6 1.300-1.300 1.300h-6.300" fill="none" stroke="#444" stroke-width="1.200"/></svg>
<div class="t" style="left:14.6px;top:376.4px;font-size:9.75px;transform:scaleX(0.99);">Language</div>
<div style="position:absolute;left:124.4px;top:370.8px;width:134.2px;height:22.4px;background:#fff;border:1px solid #dcdcdc;border-radius:4px"></div>
<div class="t" style="left:133.3px;top:376.2px;font-size:9.75px;transform:scaleX(0.971);">(Default)</div>
<svg style="left:241px;top:376.8px" width="12" height="10" viewBox="672 434.8 12 10" ><path d="M674.500 437.6h6.400l-3.200 3.400z" fill="#333"/></svg>
<svg style="left:266px;top:376.8px" width="12" height="12" viewBox="697 434.8 12 12" ><path d="M699 436.7h6.300c.7 0 1.300.6 1.300 1.300v4.500c0 .7-.6 1.300-1.300 1.300h-6.300" fill="none" stroke="#444" stroke-width="1.200"/></svg>
<svg style="left:13px;top:412.5px" width="6" height="8" viewBox="444 470.5 6 8" ><path d="M445.200 471.5v5.600l4-2.800z" fill="#555"/></svg>
<div class="t" style="left:22.5px;top:409.7px;font-size:9.75px;transform:scaleX(0.932);color:#2b2b2b;-webkit-text-stroke:.2px #2b2b2b">APPEARANCE</div>
<div style="position:absolute;left:0px;top:434.0px;width:306px;height:1px;background:#e2e2e2"></div>
<svg style="left:13px;top:448.5px" width="6" height="8" viewBox="444 506.5 6 8" ><path d="M445.200 507.5v5.600l4-2.800z" fill="#555"/></svg>
<div class="t" style="left:22.5px;top:445.7px;font-size:9.75px;transform:scaleX(0.932);color:#2b2b2b;-webkit-text-stroke:.2px #2b2b2b">BEHAVIOR</div>
<div style="position:absolute;left:0px;top:470.0px;width:306px;height:1px;background:#e2e2e2"></div>
<svg style="left:13px;top:484.5px" width="6" height="8" viewBox="444 542.5 6 8" ><path d="M445.200 543.5v5.600l4-2.800z" fill="#555"/></svg>
<div class="t" style="left:22.5px;top:481.7px;font-size:9.75px;transform:scaleX(0.932);color:#2b2b2b;-webkit-text-stroke:.2px #2b2b2b">DATA</div>
<div style="position:absolute;left:0px;top:506.0px;width:306px;height:1px;background:#e2e2e2"></div>
<svg style="left:13px;top:520.5px" width="6" height="8" viewBox="444 578.5 6 8" ><path d="M445.200 579.5v5.600l4-2.800z" fill="#555"/></svg>
<div class="t" style="left:22.5px;top:517.7px;font-size:9.75px;transform:scaleX(0.932);color:#2b2b2b;-webkit-text-stroke:.2px #2b2b2b">DESIGN</div>
<div style="position:absolute;left:0px;top:542.0px;width:306px;height:1px;background:#e2e2e2"></div>
<svg style="left:13px;top:556.5px" width="6" height="8" viewBox="444 614.5 6 8" ><path d="M445.200 615.5v5.600l4-2.800z" fill="#555"/></svg>
<div class="t" style="left:22.5px;top:553.7px;font-size:9.75px;transform:scaleX(0.932);color:#2b2b2b;-webkit-text-stroke:.2px #2b2b2b">NAVIGATION</div>
<div style="position:absolute;left:0px;top:578.0px;width:306px;height:1px;background:#e2e2e2"></div>
<svg style="left:13px;top:592.5px" width="6" height="8" viewBox="444 650.5 6 8" ><path d="M445.200 651.5v5.600l4-2.800z" fill="#555"/></svg>
<div class="t" style="left:22.5px;top:589.7px;font-size:9.75px;transform:scaleX(0.932);color:#2b2b2b;-webkit-text-stroke:.2px #2b2b2b">PAGE SETTINGS</div>
<div style="position:absolute;left:0px;top:614.0px;width:306px;height:1px;background:#e2e2e2"></div>
<svg style="left:13px;top:628.5px" width="6" height="8" viewBox="444 686.5 6 8" ><path d="M445.200 687.5v5.600l4-2.800z" fill="#555"/></svg>
<div class="t" style="left:22.5px;top:625.7px;font-size:9.75px;transform:scaleX(0.932);color:#2b2b2b;-webkit-text-stroke:.2px #2b2b2b">PRINTING</div>
<div style="position:absolute;left:0px;top:650.0px;width:306px;height:1px;background:#e2e2e2"></div>
</div>
<div id="tabs"><div class="act"></div>
<svg style="left:11px;top:10px" width="24" height="24" viewBox="748 68 24 24" ><path d="M765.91 78.33L768.47 78.35L768.47 81.45L765.91 81.47L765.17 83.25L766.96 85.08L764.78 87.26L762.95 85.47L761.17 86.21L761.15 88.77L758.05 88.77L758.03 86.21L756.25 85.47L754.42 87.26L752.24 85.08L754.03 83.25L753.29 81.47L750.73 81.45L750.73 78.35L753.29 78.33L754.03 76.55L752.24 74.72L754.42 72.54L756.25 74.33L758.03 73.59L758.05 71.03L761.15 71.03L761.17 73.59L762.95 74.33L764.78 72.54L766.96 74.72L765.17 76.55zM763.90 79.90a4.3 4.3 0 1 0 -8.6 0a4.3 4.3 0 1 0 8.6 0z" fill="#fff" fill-rule="evenodd"/><circle cx="759.600" cy="79.900" r="1.900" fill="#fff"/></svg>
<div style="position:absolute;left:12px;top:52.5px;width:22px;height:24px;color:#fff;font-family:'DejaVu Sans',sans-serif;font-style:italic;font-size:18px;line-height:24px;text-align:center">ƒ</div>
<svg style="left:13px;top:98px" width="20" height="22" viewBox="750 156 20 22" ><path d="M752.100 161.300c0-1.900 3.300-3.400 7.400-3.400s7.400 1.500 7.400 3.400v10.400c0 1.900-3.300 3.400-7.400 3.400s-7.400-1.500-7.400-3.400z" fill="#fff"/><ellipse cx="759.500" cy="161.500" rx="5.600" ry="2" fill="#616161"/></svg>
<svg style="left:11px;top:140px" width="24" height="24" viewBox="748 198 24 24" ><g fill="none" stroke="#fff" stroke-width="1.700"><rect x="756" y="200.200" width="7" height="4.800"/><rect x="750.700" y="213.100" width="7.100" height="4.800"/><rect x="761.100" y="213.100" width="7.100" height="4.800"/><path d="M759.500 205v4M754.200 213v-4h10.500v4"/></g></svg>
</div>
</div>
</body>
</html>
